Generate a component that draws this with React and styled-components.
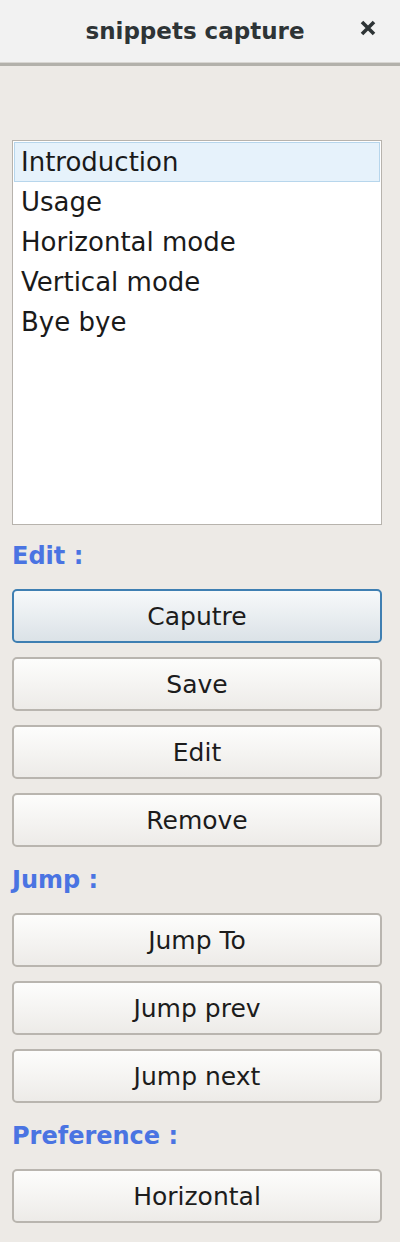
import React, { useState } from 'react';
import styled, { createGlobalStyle } from 'styled-components';

const GlobalStyle = createGlobalStyle`
  html, body {
    margin: 0;
    padding: 0;
    background: #edeae6;
    font-family: "DejaVu Sans", "Liberation Sans", sans-serif;
  }
`;

const snippets = ['Introduction', 'Usage', 'Horizontal mode', 'Vertical mode', 'Bye bye'];

const App = () => {
  const [selected, setSelected] = useState(0);

  return (
    <Window>
      <GlobalStyle />
      <TitleBar>
        <Title>snippets capture</Title>
        <CloseButton aria-label="close">
          <svg width="18" height="18" viewBox="0 0 18 18">
            <path d="M3 3 L15 15 M15 3 L3 15" stroke="#2e3436" strokeWidth="3.6" strokeLinecap="butt" />
          </svg>
        </CloseButton>
      </TitleBar>

      <Body>
        <ListBox>
          {snippets.map((name, index) => (
            <ListRow key={name} active={index === selected} onClick={() => setSelected(index)}>
              {name}
            </ListRow>
          ))}
        </ListBox>

        <SectionLabel>Edit :</SectionLabel>
        <ButtonGroup>
          <Button focused>Caputre</Button>
          <Button>Save</Button>
          <Button>Edit</Button>
          <Button>Remove</Button>
        </ButtonGroup>

        <SectionLabel>Jump :</SectionLabel>
        <ButtonGroup>
          <Button>Jump To</Button>
          <Button>Jump prev</Button>
          <Button>Jump next</Button>
        </ButtonGroup>

        <SectionLabel>Preference :</SectionLabel>
        <ButtonGroup>
          <Button>Horizontal</Button>
        </ButtonGroup>
      </Body>
    </Window>
  );
};

const Window = styled.div`
  width: 400px;
  min-height: 1242px;
  display: flex;
  flex-direction: column;
  background: #edeae6;
`;

const TitleBar = styled.div`
  height: 63px;
  display: flex;
  align-items: center;
  justify-content: center;
  position: relative;
  background: #f2f2f2;
  border-bottom: 3px solid #b3b1ab;
  box-shadow: inset 0 -1px 0 #d8d6d2;
`;

const Title = styled.div`
  font-size: 23px;
  font-weight: bold;
  color: #2e3436;
  margin-left: -10px;
  margin-top: -2px;
`;

const CloseButton = styled.div`
  position: absolute;
  right: 23px;
  top: 19px;
  width: 18px;
  height: 18px;
  display: flex;
`;

const Body = styled.div`
  display: flex;
  flex-direction: column;
  padding: 74px 18px 0 12px;
`;

const ListBox = styled.div`
  height: 381px;
  background: #ffffff;
  border: 1px solid #b7b3ad;
  display: flex;
  flex-direction: column;
  padding: 1px;
`;

const ListRow = styled.div`
  height: 40px;
  box-sizing: border-box;
  display: flex;
  align-items: center;
  padding-left: 6px;
  font-size: 26px;
  color: #1a1a1a;
  cursor: pointer;
  background: ${(p) => (p.active ? '#e6f2fb' : 'transparent')};
  border: 1px solid ${(p) => (p.active ? '#b7d6ec' : 'transparent')};
`;

const SectionLabel = styled.div`
  height: 64px;
  display: flex;
  align-items: center;
  padding-bottom: 2px;
  box-sizing: border-box;
  font-size: 24px;
  font-weight: bold;
  color: #4a74e2;
`;

const ButtonGroup = styled.div`
  display: flex;
  flex-direction: column;
  gap: 14px;
  margin-bottom: 2px;
`;

const Button = styled.button`
  height: 54px;
  width: 100%;
  border-radius: 5px;
  font-family: "DejaVu Sans", "Liberation Sans", sans-serif;
  font-size: 25px;
  color: #1c1c1c;
  cursor: pointer;
  border: ${(p) => (p.focused ? '2px solid #3f7fb2' : '2px solid #b9b5af')};
  background: ${(p) =>
    p.focused
      ? 'linear-gradient(to bottom, #f7f9fa, #dbe2e7)'
      : 'linear-gradient(to bottom, #fdfdfc, #edebe8)'};
`;

export default App;
